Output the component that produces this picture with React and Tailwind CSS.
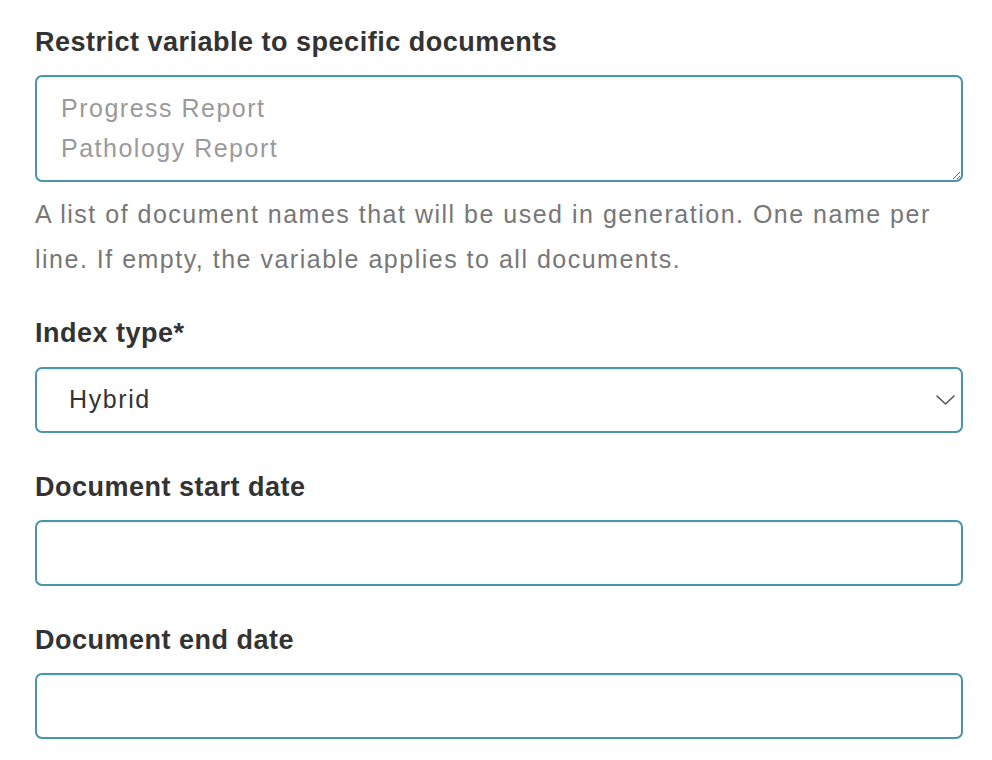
import React from "react";

function Label({ children, className = "" }) {
  return (
    <div className={"text-[27px] leading-[30px] font-bold tracking-[0.5px] text-[#333333] " + className}>
      {children}
    </div>
  );
}

export default function App() {
  return (
    <div className="min-h-[760px] bg-white pl-[35px] pr-[29px] pt-[27px] font-['Liberation_Sans',Arial,sans-serif]">
      <Label>Restrict variable to specific documents</Label>
      <textarea
        className="mt-[18px] block w-full h-[107px] rounded-[7px] border-2 border-[#4a96a7] px-[24px] py-[11px] text-[25px] leading-[40px] tracking-[1.5px] text-[#333] placeholder:text-[#9a9a9a] outline-none shadow-[inset_0_1px_2px_rgba(0,0,0,0.08)] font-['Liberation_Sans',Arial,sans-serif]"
        placeholder={"Progress Report\nPathology Report"}
      />
      <p className="mt-[10px] text-[25px] leading-[45px] tracking-[1.5px] text-[#777777]">
        A list of document names that will be used in generation. One name per line. If empty, the variable applies to all documents.
      </p>

      <Label className="mt-[36px]">Index type*</Label>
      <div className="mt-[19px] relative h-[66px] w-full rounded-[7px] border-2 border-[#4a96a7] shadow-[inset_0_1px_2px_rgba(0,0,0,0.08)] flex items-center pl-[32px] pr-[8px]">
        <span className="text-[25px] tracking-[1.6px] text-[#333333]">Hybrid</span>
        <svg className="absolute right-[6px] top-1/2 -translate-y-1/2" width="19" height="10" viewBox="0 0 19 10" fill="none">
          <path d="M1 1 L9.5 9 L18 1" stroke="#555" strokeWidth="1.6" strokeLinecap="round" strokeLinejoin="round" />
        </svg>
      </div>

      <Label className="mt-[39px]">Document start date</Label>
      <div className="mt-[18px] h-[66px] w-full rounded-[7px] border-2 border-[#4a96a7] shadow-[inset_0_1px_2px_rgba(0,0,0,0.08)]" />

      <Label className="mt-[39px]">Document end date</Label>
      <div className="mt-[18px] h-[66px] w-full rounded-[7px] border-2 border-[#4a96a7] shadow-[inset_0_1px_2px_rgba(0,0,0,0.08)]" />
    </div>
  );
}
